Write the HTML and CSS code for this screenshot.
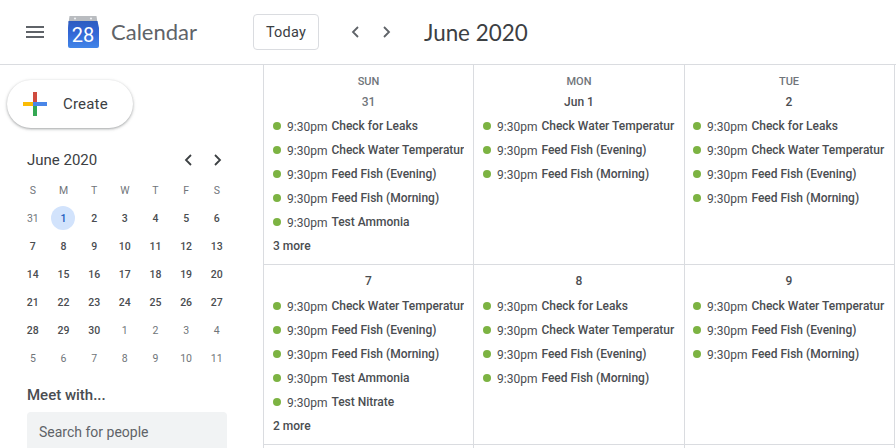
FILE: index.html
```html
<!DOCTYPE html>
<html lang="en">
<head>
    <meta charset="UTF-8">
    <title>Calendar - June 2020</title>
    <link rel="stylesheet" href="styles.css">
</head>
<body>
    <header class="topbar">
        <svg class="menu-icon" width="18" height="12" viewBox="0 0 18 12"><path d="M0 0h18v2H0zM0 5h18v2H0zM0 10h18v2H0z" fill="#5f6368"/></svg>
        <svg class="logo" width="32" height="32" viewBox="0 0 32 32">
            <defs>
                <linearGradient id="logoBlue" x1="0" y1="0" x2="0" y2="1">
                    <stop offset="0" stop-color="#2d5cc0"/>
                    <stop offset="0.45" stop-color="#3367d6"/>
                    <stop offset="1" stop-color="#4285e8"/>
                </linearGradient>
            </defs>
            <path d="M2.5 0h27l1 7h-29z" fill="#b9bcc0"/>
            <circle cx="8" cy="2.5" r="1.1" fill="#eef0f2"/>
            <circle cx="24" cy="2.5" r="1.1" fill="#eef0f2"/>
            <path d="M1.5 5h29l1.5 7v18a2 2 0 0 1-2 2H3a2 2 0 0 1-2-2V12z" fill="url(#logoBlue)"/>
            <text x="16" y="26" class="logo-num">28</text>
        </svg>
        <span class="brand">Calendar</span>
        <button class="today-btn">Today</button>
        <svg class="nav-prev" width="8" height="12" viewBox="0 0 8 12"><path d="M7 1L2 6l5 5" fill="none" stroke="#5f6368" stroke-width="1.8"/></svg>
        <svg class="nav-next" width="8" height="12" viewBox="0 0 8 12"><path d="M1 1l5 5-5 5" fill="none" stroke="#5f6368" stroke-width="1.8"/></svg>
        <span class="range-title">June 2020</span>
    </header>

    <div class="layout">
        <aside class="sidebar">
            <button class="create-btn">
                <svg width="24" height="24" viewBox="0 0 24 24">
                    <path d="M10 0h4v10h-4z" fill="#cf4b3e"/>
                    <path d="M0 10h10v4H0z" fill="#fbbc04"/>
                    <path d="M10 10h14v4H10z" fill="#4a86e8"/>
                    <path d="M10 14h4v10h-4z" fill="#34a853"/>
                </svg>
                <span>Create</span>
            </button>

            <div class="mini-head">
                <span class="mini-title">June 2020</span>
                <svg class="mini-prev" width="8" height="12" viewBox="0 0 8 12"><path d="M7 1L2 6l5 5" fill="none" stroke="#3c4043" stroke-width="1.8"/></svg>
                <svg class="mini-next" width="8" height="12" viewBox="0 0 8 12"><path d="M1 1l5 5-5 5" fill="none" stroke="#3c4043" stroke-width="1.8"/></svg>
            </div>

            <div class="mini-grid">
                <span class="dow">S</span><span class="dow">M</span><span class="dow">T</span><span class="dow">W</span><span class="dow">T</span><span class="dow">F</span><span class="dow">S</span>
                <span class="off">31</span><span class="selected"><b>1</b></span><span>2</span><span>3</span><span>4</span><span>5</span><span>6</span>
                <span>7</span><span>8</span><span>9</span><span>10</span><span>11</span><span>12</span><span>13</span>
                <span>14</span><span>15</span><span>16</span><span>17</span><span>18</span><span>19</span><span>20</span>
                <span>21</span><span>22</span><span>23</span><span>24</span><span>25</span><span>26</span><span>27</span>
                <span>28</span><span>29</span><span>30</span><span class="off">1</span><span class="off">2</span><span class="off">3</span><span class="off">4</span>
                <span class="off">5</span><span class="off">6</span><span class="off">7</span><span class="off">8</span><span class="off">9</span><span class="off">10</span><span class="off">11</span>
            </div>

            <h4 class="meet-title">Meet with...</h4>
            <div class="people-search">Search for people</div>
        </aside>

        <main class="month">
            <div class="cell first-row">
                <div class="dow-label">SUN</div>
                <div class="date muted">31</div>
                <div class="event"><i></i><span class="time">9:30pm</span><span class="name">Check for Leaks</span></div>
                <div class="event"><i></i><span class="time">9:30pm</span><span class="name">Check Water Temperatur</span></div>
                <div class="event"><i></i><span class="time">9:30pm</span><span class="name">Feed Fish (Evening)</span></div>
                <div class="event"><i></i><span class="time">9:30pm</span><span class="name">Feed Fish (Morning)</span></div>
                <div class="event"><i></i><span class="time">9:30pm</span><span class="name">Test Ammonia</span></div>
                <div class="more">3 more</div>
            </div>
            <div class="cell first-row">
                <div class="dow-label">MON</div>
                <div class="date">Jun 1</div>
                <div class="event"><i></i><span class="time">9:30pm</span><span class="name">Check Water Temperatur</span></div>
                <div class="event"><i></i><span class="time">9:30pm</span><span class="name">Feed Fish (Evening)</span></div>
                <div class="event"><i></i><span class="time">9:30pm</span><span class="name">Feed Fish (Morning)</span></div>
            </div>
            <div class="cell first-row">
                <div class="dow-label">TUE</div>
                <div class="date">2</div>
                <div class="event"><i></i><span class="time">9:30pm</span><span class="name">Check for Leaks</span></div>
                <div class="event"><i></i><span class="time">9:30pm</span><span class="name">Check Water Temperatur</span></div>
                <div class="event"><i></i><span class="time">9:30pm</span><span class="name">Feed Fish (Evening)</span></div>
                <div class="event"><i></i><span class="time">9:30pm</span><span class="name">Feed Fish (Morning)</span></div>
            </div>
            <div class="cell">
                <div class="date">7</div>
                <div class="event"><i></i><span class="time">9:30pm</span><span class="name">Check Water Temperatur</span></div>
                <div class="event"><i></i><span class="time">9:30pm</span><span class="name">Feed Fish (Evening)</span></div>
                <div class="event"><i></i><span class="time">9:30pm</span><span class="name">Feed Fish (Morning)</span></div>
                <div class="event"><i></i><span class="time">9:30pm</span><span class="name">Test Ammonia</span></div>
                <div class="event"><i></i><span class="time">9:30pm</span><span class="name">Test Nitrate</span></div>
                <div class="more">2 more</div>
            </div>
            <div class="cell">
                <div class="date">8</div>
                <div class="event"><i></i><span class="time">9:30pm</span><span class="name">Check for Leaks</span></div>
                <div class="event"><i></i><span class="time">9:30pm</span><span class="name">Check Water Temperatur</span></div>
                <div class="event"><i></i><span class="time">9:30pm</span><span class="name">Feed Fish (Evening)</span></div>
                <div class="event"><i></i><span class="time">9:30pm</span><span class="name">Feed Fish (Morning)</span></div>
            </div>
            <div class="cell">
                <div class="date">9</div>
                <div class="event"><i></i><span class="time">9:30pm</span><span class="name">Check Water Temperatur</span></div>
                <div class="event"><i></i><span class="time">9:30pm</span><span class="name">Feed Fish (Evening)</span></div>
                <div class="event"><i></i><span class="time">9:30pm</span><span class="name">Feed Fish (Morning)</span></div>
            </div>
            <div class="cell"></div>
            <div class="cell"></div>
            <div class="cell"></div>
        </main>
    </div>
</body>
</html>
```

FILE: styles.css
```css
html, body {
    height: 100%;
    overflow: hidden;
}

body {
    margin: 0;
    font-family: Roboto, Arial, sans-serif;
    color: #3c4043;
    background-color: #fff;
}

.topbar {
    display: flex;
    align-items: center;
    height: 64px;
    border-bottom: 1px solid #dadce0;
}

.menu-icon {
    margin-left: 26px;
}

.logo {
    margin-left: 23px;
}

.logo-num {
    font-family: Roboto, Arial, sans-serif;
    font-size: 20px;
    fill: #fff;
    text-anchor: middle;
}

.brand {
    width: 142px;
    margin: 0 0 2px 12px;
    font-family: Lato, Roboto, sans-serif;
    font-size: 22px;
    color: #5f6368;
}

.today-btn {
    width: 66px;
    height: 36px;
    padding: 0;
    border: 1px solid #dadce0;
    border-radius: 4px;
    background-color: #fff;
    color: #3c4043;
    font-family: Roboto, Arial, sans-serif;
    font-size: 14.5px;
    letter-spacing: 0.2px;
}

.nav-prev {
    margin-left: 32px;
}

.nav-next {
    margin-left: 24px;
}

.range-title {
    margin-left: 33px;
    font-family: Lato, Roboto, sans-serif;
    font-size: 22.4px;
    color: #3c4043;
}

.layout {
    display: flex;
    height: 383px;
    overflow: hidden;
}

.sidebar {
    flex: none;
    width: 263px;
    border-right: 1px solid #dadce0;
}

.create-btn {
    display: flex;
    align-items: center;
    gap: 16px;
    width: 126px;
    height: 48px;
    margin: 15px 0 0 7px;
    padding: 0 0 0 16px;
    border: none;
    border-radius: 24px;
    background-color: #fff;
    box-shadow: 0 1px 2px rgba(60, 64, 67, 0.3), 0 1px 3px 1px rgba(60, 64, 67, 0.15);
    color: #3c4043;
    font-family: Roboto, Arial, sans-serif;
    font-size: 15px;
    letter-spacing: 0.2px;
}

.mini-head {
    display: flex;
    align-items: center;
    height: 20px;
    margin: 22px 0 0 27px;
}

.mini-title {
    width: 157px;
    font-size: 15px;
}

.mini-next {
    margin-left: 22px;
}

.mini-grid {
    display: grid;
    grid-template-columns: repeat(7, 30.67px);
    grid-auto-rows: 28px;
    width: 215px;
    margin: 6px 0 0 17.5px;
    font-size: 10.5px;
    font-weight: 500;
    color: #4a4d51;
}

.mini-grid span {
    display: flex;
    align-items: center;
    justify-content: center;
}

.mini-grid .dow,
.mini-grid .off {
    color: #70757a;
    font-weight: 400;
}

.mini-grid .selected b {
    display: flex;
    align-items: center;
    justify-content: center;
    width: 24px;
    height: 24px;
    border-radius: 50%;
    background-color: #d2e3fc;
    color: #185abc;
    font-weight: 500;
}

.meet-title {
    margin: 13px 0 0 27px;
    font-size: 15px;
    line-height: 20px;
    font-weight: 500;
    color: #4a4d51;
}

.people-search {
    width: 188px;
    height: 48px;
    margin: 7px 0 0 27px;
    padding-left: 12px;
    border-radius: 4px;
    background-color: #f1f3f4;
    color: #5f6368;
    font-size: 14px;
    line-height: 40px;
}

.month {
    flex: none;
    display: grid;
    grid-template-columns: 210px 211px 210px;
    grid-template-rows: 200px 180px 180px;
}

.cell {
    padding: 6px 9px 0 9px;
    border-right: 1px solid #dadce0;
    border-bottom: 1px solid #dadce0;
}

.cell:nth-child(3n) {
    padding-left: 8px;
}

.dow-label {
    margin-top: 4px;
    font-size: 11px;
    font-weight: 500;
    line-height: 14px;
    text-align: center;
    color: #70757a;
}

.date {
    height: 22px;
    margin-bottom: 1px;
    font-size: 12px;
    font-weight: 500;
    line-height: 20px;
    text-align: center;
    color: #4a4d51;
}

.first-row .date {
    height: 21px;
    margin-top: 3px;
}

.date.muted {
    color: #70757a;
}

.event {
    display: flex;
    align-items: center;
    height: 24px;
    white-space: nowrap;
    overflow: hidden;
}

.event i {
    flex: none;
    width: 8px;
    height: 8px;
    margin-right: 6px;
    border-radius: 50%;
    background-color: #7cb342;
}

.time {
    margin: 1px 4px 0 0;
    font-size: 12px;
    color: #4a4d51;
}

.name {
    font-size: 12px;
    font-weight: 500;
    color: #4a4d51;
}

.more {
    height: 24px;
    font-size: 12px;
    font-weight: 500;
    line-height: 25px;
    color: #4a4d51;
}
```
